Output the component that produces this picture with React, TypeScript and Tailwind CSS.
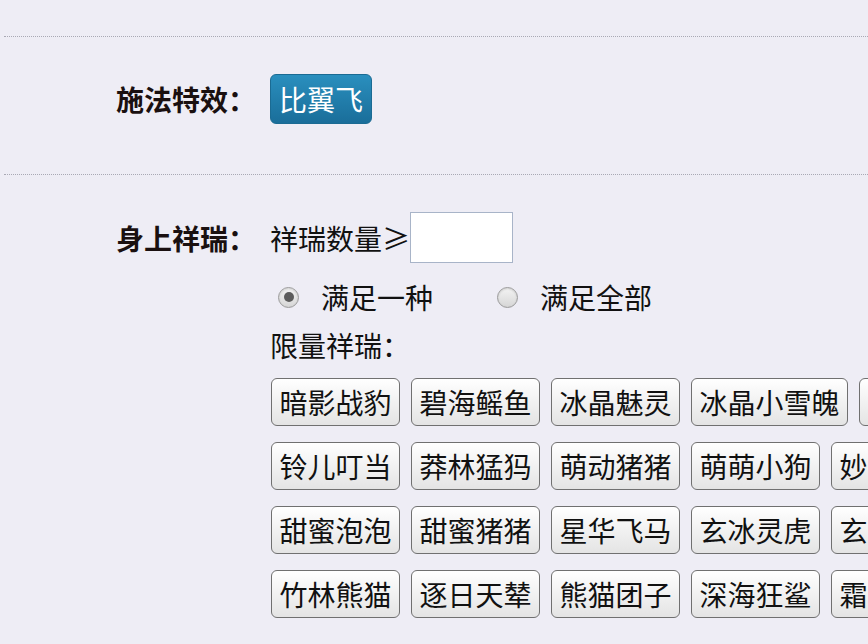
const rows = [
  ['暗影战豹', '碧海鳐鱼', '冰晶魅灵', '冰晶小雪魄', '冰晶之'],
  ['铃儿叮当', '莽林猛犸', '萌动猪猪', '萌萌小狗', '妙音鸾'],
  ['甜蜜泡泡', '甜蜜猪猪', '星华飞马', '玄冰灵虎', '玄霜之'],
  ['竹林熊猫', '逐日天辇', '熊猫团子', '深海狂鲨', '霜雪之'],
];

function Divider() {
  return <div className="ml-[4px] border-t border-dotted border-[#a9a9b4]" />;
}

function Radio({ checked, label }: { checked?: boolean; label: string }) {
  return (
    <label className="flex items-center">
      <span className="flex h-[21px] w-[21px] items-center justify-center rounded-full border border-[#9a9a9a] bg-gradient-to-b from-[#f4f4f4] to-[#d6d6d6] shadow-[inset_0_1px_2px_rgba(0,0,0,0.15)]">
        {checked && <span className="h-[10px] w-[10px] rounded-full bg-[#5c5c5c]" />}
      </span>
      <span className="ml-[22px]">{label}</span>
    </label>
  );
}

export default function App() {
  return (
    <div
      className="h-[644px] w-[868px] overflow-hidden bg-[#eeedf5] pt-[36px] text-[28px] leading-none text-[#111]"
      style={{ fontFamily: '"Noto Sans CJK SC", "Noto Sans", sans-serif' }}
    >
      <Divider />
      <div className="flex h-[137px] items-start pt-[37px]">
        <div className="w-[270px] pr-[14px] pt-[11px] text-right font-bold text-[#1a1010]">施法特效：</div>
        <button className="h-[50px] rounded-[6px] border border-[#1b6b93] bg-gradient-to-b from-[#2a8fbe] to-[#1a6e9a] px-[8px] text-[28px] leading-none text-white">
          比翼飞
        </button>
      </div>
      <Divider />
      <div className="flex pt-[37px]">
        <div className="w-[270px] shrink-0 pr-[14px] pt-[12px] text-right font-bold text-[#1a1010]">身上祥瑞：</div>
        <div className="flex flex-col">
          <div className="flex items-center">
            <span>祥瑞数量≥</span>
            <input className="h-[51px] w-[103px] border border-[#a8b4c8] bg-white outline-none" />
          </div>
          <div className="mt-[20px] flex items-center gap-[64px] pl-[8px]">
            <Radio checked label="满足一种" />
            <Radio label="满足全部" />
          </div>
          <div className="mt-[20px]">限量祥瑞：</div>
          <div className="mt-[19px] flex flex-col gap-[16px]">
            {rows.map((r, i) => (
              <div key={i} className="flex gap-[11px] whitespace-nowrap pl-px">
                {r.map((name) => (
                  <button
                    key={name}
                    className="h-[48px] shrink-0 rounded-[6px] border border-[#707070] bg-gradient-to-b from-[#ffffff] to-[#e4e4e4] px-[7.5px] text-[28px] leading-none text-[#111]"
                  >
                    {name}
                  </button>
                ))}
              </div>
            ))}
          </div>
        </div>
      </div>
    </div>
  );
}
